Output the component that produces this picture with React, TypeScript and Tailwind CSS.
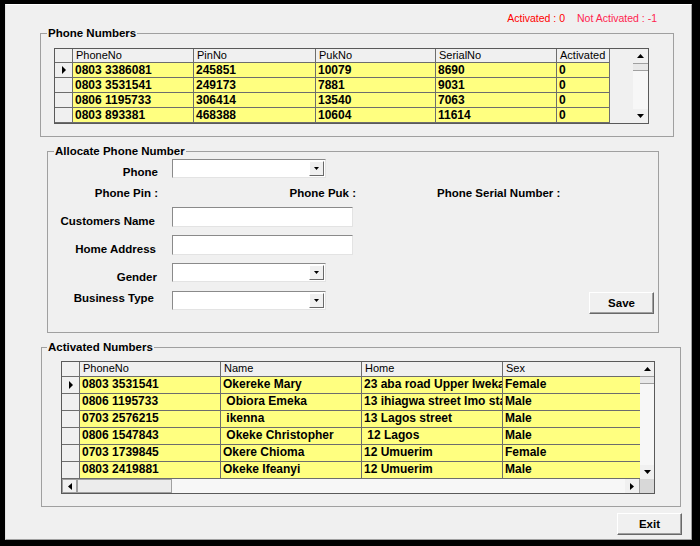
import React from 'react'

type Col = { label: string; w: string }

const phoneCols: Col[] = [
  { label: 'PhoneNo', w: 'w-[121px]' },
  { label: 'PinNo', w: 'w-[122px]' },
  { label: 'PukNo', w: 'w-[120px]' },
  { label: 'SerialNo', w: 'w-[121px]' },
  { label: 'Activated', w: 'w-[53px]' },
]

const phoneRows = [
  ['0803 3386081', '245851', '10079', '8690', '0'],
  ['0803 3531541', '249173', '7881', '9031', '0'],
  ['0806 1195733', '306414', '13540', '7063', '0'],
  ['0803 893381', '468388', '10604', '11614', '0'],
  ['0806 1547843', '512204', '9926', '6402', '0'],
]

const activeCols: Col[] = [
  { label: 'PhoneNo', w: 'w-[141px]' },
  { label: 'Name', w: 'w-[141px]' },
  { label: 'Home', w: 'w-[141px]' },
  { label: 'Sex', w: 'w-[141px]' },
]

const activeRows = [
  ['0803 3531541', 'Okereke Mary', '23 aba road Upper Iweka Onitsha', 'Female'],
  ['0806 1195733', ' Obiora Emeka', '13 ihiagwa street Imo state', 'Male'],
  ['0703 2576215', ' ikenna', '13 Lagos street', 'Male'],
  ['0806 1547843', ' Okeke Christopher', ' 12 Lagos', 'Male'],
  ['0703 1739845', 'Okere Chioma', '12 Umuerim', 'Female'],
  ['0803 2419881', 'Okeke Ifeanyi', '12 Umuerim', 'Male'],
]

function Arrow({ dir }: { dir: 'up' | 'down' | 'left' | 'right' }) {
  if (dir === 'up')
    return (
      <svg width="7" height="4" viewBox="0 0 7 4">
        <polygon points="0,4 7,4 3.5,0" fill="#000" />
      </svg>
    )
  if (dir === 'down')
    return (
      <svg width="7" height="4" viewBox="0 0 7 4">
        <polygon points="0,0 7,0 3.5,4" fill="#000" />
      </svg>
    )
  if (dir === 'left')
    return (
      <svg width="4" height="7" viewBox="0 0 4 7">
        <polygon points="4,0 4,7 0,3.5" fill="#000" />
      </svg>
    )
  return (
    <svg width="4" height="7" viewBox="0 0 4 7">
      <polygon points="0,0 0,7 4,3.5" fill="#000" />
    </svg>
  )
}

function RowPointer() {
  return (
    <svg width="4" height="8" viewBox="0 0 4 8">
      <polygon points="0,0 0,8 4,4" fill="#000" />
    </svg>
  )
}

function VScroll({ w }: { w: string }) {
  return (
    <div className={`${w} h-full flex flex-col bg-[#f0f0f0]`}>
      <div className="h-[14px] flex items-center justify-center">
        <Arrow dir="up" />
      </div>
      <div className="h-[8px] border-y border-[#a0a0a0] bg-[#e8e8e8]" />
      <div className="flex-1 bg-[#f7f7f7]" />
      <div className="h-[14px] flex items-center justify-center">
        <Arrow dir="down" />
      </div>
    </div>
  )
}

function GridHeader({ cols, h }: { cols: Col[]; h: string }) {
  return (
    <div className={`flex ${h} w-max`}>
      <div className="w-[18px] shrink-0 border-r border-b border-[#6d6d6d] bg-[#f0f0f0]" />
      {cols.map((c) => (
        <div
          key={c.label}
          className={`${c.w} shrink-0 border-r border-b border-[#6d6d6d] bg-[#f0f0f0] pl-[3px] text-[11px] leading-[13px] whitespace-nowrap overflow-hidden`}
        >
          {c.label}
        </div>
      ))}
    </div>
  )
}

function GridRow({ cols, row, h, first }: { cols: Col[]; row: string[]; h: string; first: boolean }) {
  return (
    <div className={`flex ${h} w-max`}>
      <div className="w-[18px] shrink-0 border-r border-b border-[#6d6d6d] bg-[#f0f0f0] flex items-center justify-center">
        {first && <RowPointer />}
      </div>
      {row.map((v, i) => (
        <div
          key={i}
          className={`${cols[i].w} shrink-0 border-r border-b border-[#6d6d6d] bg-[#ffff80] pl-[2px] text-[12px] font-bold leading-[14px] whitespace-pre overflow-hidden`}
        >
          {v}
        </div>
      ))}
    </div>
  )
}

function Combo() {
  return (
    <div className="w-[154px] h-[19px] bg-white border border-t-[#8a8a8a] border-l-[#8a8a8a] border-r-[#e3e3e3] border-b-[#e3e3e3] flex justify-end p-[1px]">
      <div className="w-[15px] h-full bg-[#f0f0f0] border border-t-white border-l-white border-r-[#696969] border-b-[#696969] flex items-center justify-center">
        <svg width="5" height="3" viewBox="0 0 5 3">
          <polygon points="0,0 5,0 2.5,3" fill="#000" />
        </svg>
      </div>
    </div>
  )
}

function TextBox() {
  return (
    <div className="w-[181px] h-[20px] bg-white border border-t-[#8a8a8a] border-l-[#8a8a8a] border-r-[#e3e3e3] border-b-[#e3e3e3]" />
  )
}

function Button({ label }: { label: string }) {
  return (
    <button className="w-[65px] h-[22px] bg-[#f0f0f0] border border-t-white border-l-white border-r-[#696969] border-b-[#696969] shadow-[inset_-1px_-1px_0_#a0a0a0] text-[11.5px] font-bold leading-[14px]">
      {label}
    </button>
  )
}

const labelCls = 'w-[112px] shrink-0 text-right text-[11.5px] font-bold leading-[14px] whitespace-nowrap'

export default function App() {
  return (
    <div className="w-[700px] h-[546px] bg-black pt-[4px] pl-[5px] pr-[8px] pb-[6px] font-['Liberation_Sans',Arial,sans-serif] text-black">
      <div className="h-full bg-[#f0f0f0] border border-t-white border-l-[#e3e3e3] border-r-[#a0a0a0] border-b-[#a0a0a0] flex flex-col">
        {/* Status counts */}
        <div className="mt-[6px] h-[14px] flex justify-end gap-[12px] pr-[34px] text-[10.5px] leading-[14px] whitespace-pre">
          <span className="text-[#ff0000]">Activated : 0</span>
          <span className="text-[#ff1f4f]">Not Activated : -1</span>
        </div>

        {/* Phone Numbers */}
        <fieldset className="mt-[1px] ml-[34px] w-[634px] h-[111px] min-w-0 border border-[#a0a0a0]">
          <legend className="ml-[6px] px-[1px] text-[11.5px] font-bold leading-[14px]">Phone Numbers</legend>
          <div className="pl-[13px] pt-[8px]">
            <div className="w-[595px] h-[76px] border border-[#5a5a5a] bg-[#f0f0f0] flex overflow-hidden">
              <div className="flex-1 overflow-hidden">
                <GridHeader cols={phoneCols} h="h-[14px]" />
                {phoneRows.map((r, i) => (
                  <GridRow key={i} cols={phoneCols} row={r} h="h-[15px]" first={i === 0} />
                ))}
              </div>
              <VScroll w="w-[15px]" />
            </div>
          </div>
        </fieldset>

        {/* Allocate Phone Number */}
        <fieldset className="mt-[7px] ml-[41px] w-[612px] h-[189px] min-w-0 border border-[#a0a0a0]">
          <legend className="ml-[6px] px-[1px] text-[11.5px] font-bold leading-[14px]">Allocate Phone Number</legend>
          <div className="flex flex-col">
            <div className="mt-[1px] h-[19px] flex items-start">
              <div className={`${labelCls} pr-[2px] pt-[6px]`}>Phone</div>
              <div className="ml-[12px]">
                <Combo />
              </div>
            </div>
            <div className="mt-[8px] h-[14px] flex items-start text-[11.5px] font-bold leading-[14px] whitespace-nowrap">
              <div className={`${labelCls} pr-[2px]`}>Phone Pin :</div>
              <div className="w-[198px] text-right pr-[2px]">Phone Puk :</div>
              <div className="ml-[79px]">Phone Serial Number :</div>
            </div>
            <div className="mt-[7px] h-[20px] flex items-start">
              <div className={`${labelCls} pr-[5px] pt-[7px]`}>Customers Name</div>
              <div className="ml-[12px]">
                <TextBox />
              </div>
            </div>
            <div className="mt-[8px] h-[20px] flex items-start">
              <div className={`${labelCls} pr-[4px] pt-[7px]`}>Home Address</div>
              <div className="ml-[12px]">
                <TextBox />
              </div>
            </div>
            <div className="mt-[8px] h-[19px] flex items-start">
              <div className={`${labelCls} pr-[3px] pt-[7px]`}>Gender</div>
              <div className="ml-[12px]">
                <Combo />
              </div>
            </div>
            <div className="mt-[9px] h-[19px] flex items-start">
              <div className={`${labelCls} pr-[6px]`}>Business Type</div>
              <div className="ml-[12px]">
                <Combo />
              </div>
              <div className="ml-auto mr-[4px] -mt-[1px]">
                <Button label="Save" />
              </div>
            </div>
          </div>
        </fieldset>

        {/* Activated Numbers */}
        <fieldset className="mt-[7px] ml-[35px] w-[640px] h-[167px] min-w-0 border border-[#a0a0a0]">
          <legend className="ml-[5px] px-[1px] text-[11.5px] font-bold leading-[14px]">Activated Numbers</legend>
          <div className="pl-[19px] pt-[7px]">
            <div className="w-[594px] h-[133px] border border-[#5a5a5a] bg-[#f0f0f0] flex flex-col overflow-hidden">
              <div className="h-[117px] flex">
                <div className="flex-1 overflow-hidden">
                  <GridHeader cols={activeCols} h="h-[15px]" />
                  {activeRows.map((r, i) => (
                    <GridRow key={i} cols={activeCols} row={r} h="h-[17px]" first={i === 0} />
                  ))}
                </div>
                <VScroll w="w-[14px]" />
              </div>
              <div className="h-[14px] flex">
                <div className="w-[15px] border border-[#a0a0a0] flex items-center justify-center">
                  <Arrow dir="left" />
                </div>
                <div className="w-[95px] border border-[#a0a0a0] bg-[#ececec]" />
                <div className="flex-1 bg-[#f7f7f7]" />
                <div className="w-[15px] border-r border-[#a0a0a0] flex items-center justify-center">
                  <Arrow dir="right" />
                </div>
                <div className="w-[14px] bg-[#d8d8d8]" />
              </div>
            </div>
          </div>
        </fieldset>

        {/* Exit */}
        <div className="mt-[6px] flex justify-end pr-[9px]">
          <Button label="Exit" />
        </div>
      </div>
    </div>
  )
}
